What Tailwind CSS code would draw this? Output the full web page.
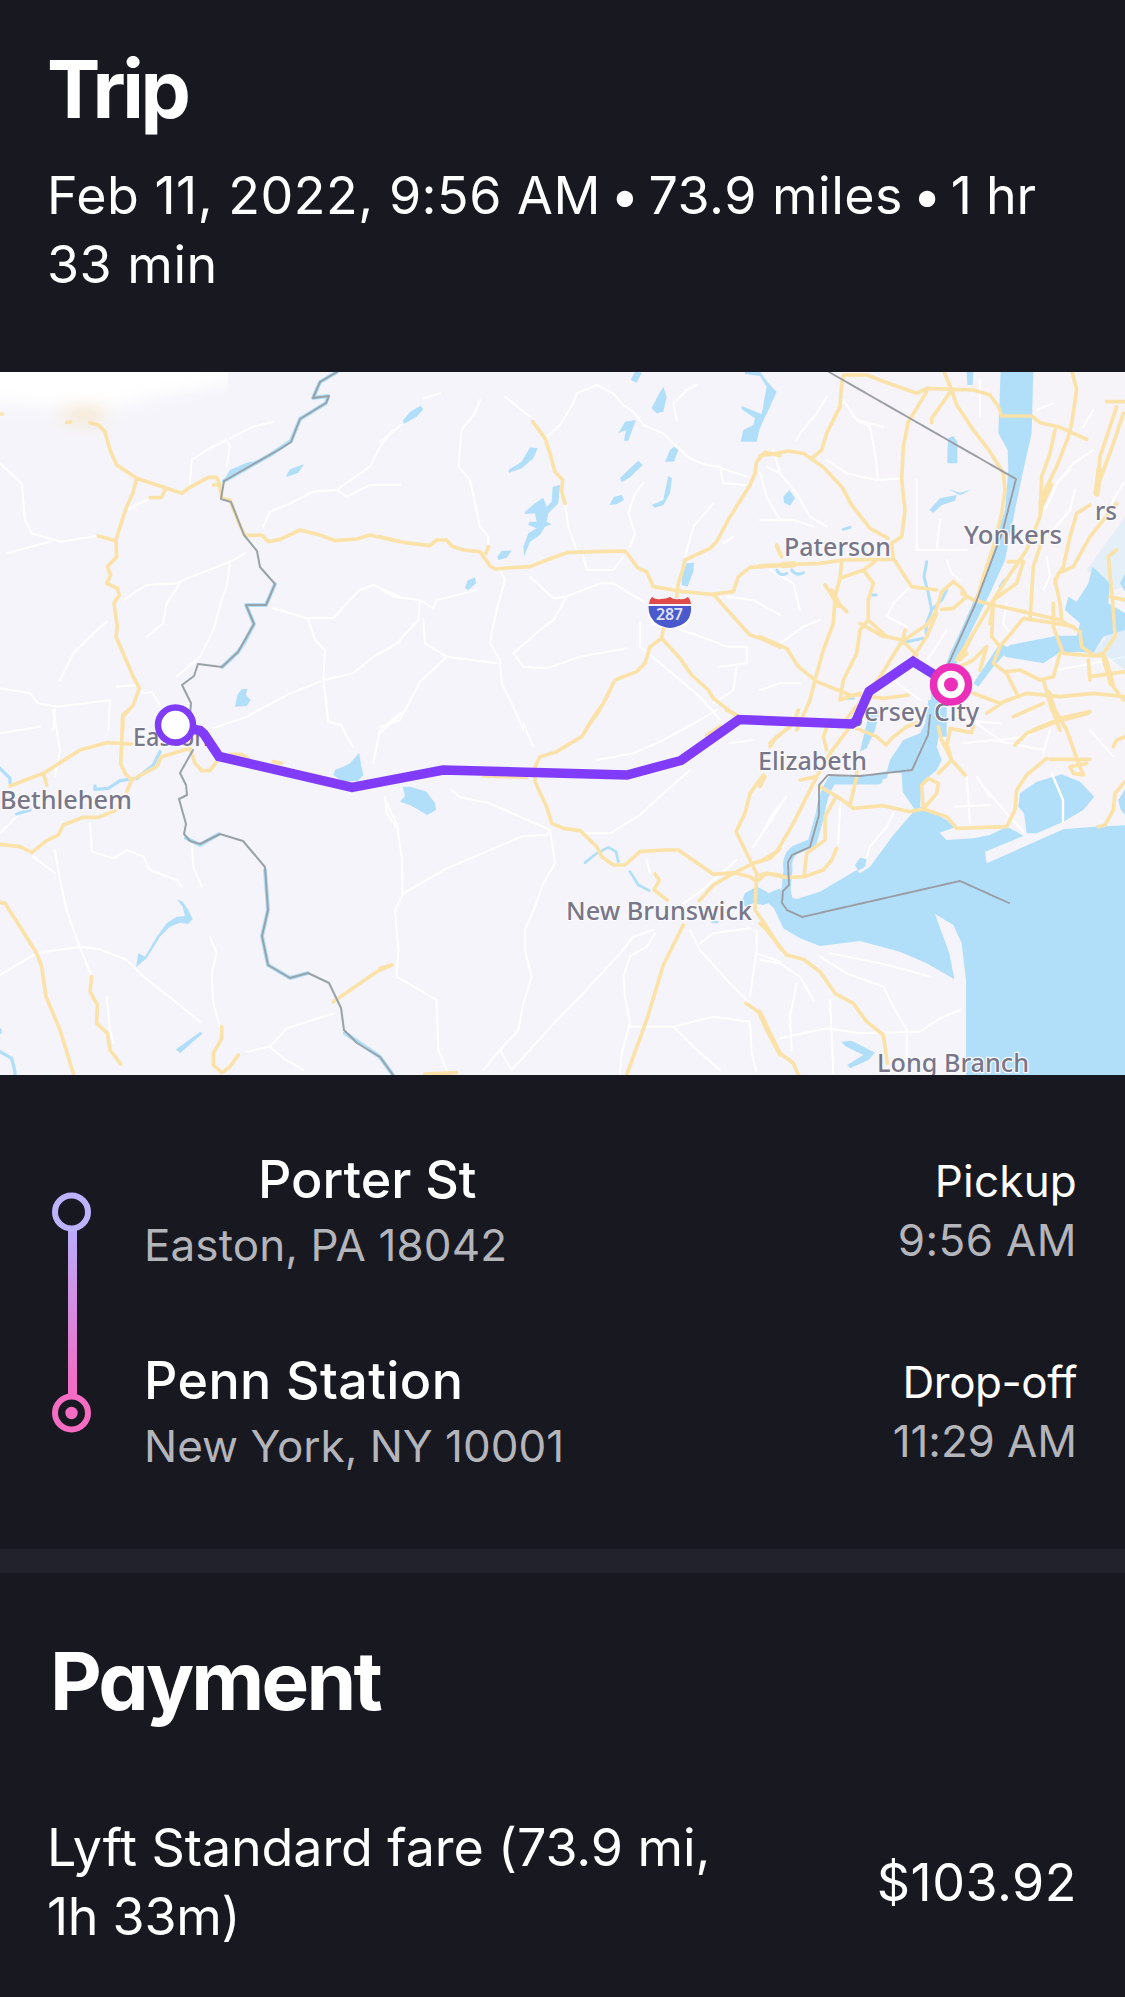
<!DOCTYPE html>
<html lang="en">
<head>
<meta charset="utf-8">
<title>Trip receipt</title>
<script src="https://cdn.jsdelivr.net/npm/@tailwindcss/browser@4"></script>
</head>
<body class="bg-[#181820] text-white font-['Inter',sans-serif] w-[1125px] h-[1997px] overflow-hidden flex flex-col">

<header class="h-[372px] shrink-0 pt-[49px] pl-[47px] pr-[40px]">
  <h1 class="text-[80px] leading-[80px] font-bold tracking-[-3.4px] [font-feature-settings:'cv11']">Trip</h1>
  <p class="mt-[32px] text-[52px] leading-[69px] font-normal tracking-[0.5px]">Feb 11, 2022, 9:56 AM<span class="[word-spacing:-5px] tracking-[-0.3px]"> • </span>73.9 miles<span class="[word-spacing:-5px] tracking-[-0.3px]"> • </span><span class="tracking-[-0.2px]">1 hr</span><br>33 min</p>
</header>

<svg class="block w-[1125px] h-[703px] shrink-0" viewBox="0 372 1125 703" fill="none" stroke-linecap="round" stroke-linejoin="round" font-family="'Noto Sans','Open Sans',sans-serif">
  <defs>
    <linearGradient id="fog" x1="0" y1="0" x2="0" y2="1"><stop offset="0" stop-color="#fff"/><stop offset=".35" stop-color="#fff" stop-opacity=".9"/><stop offset="1" stop-color="#fff" stop-opacity="0"/></linearGradient>
    <filter id="soft" x="-50%" y="-100%" width="200%" height="300%"><feGaussianBlur stdDeviation="9"/></filter>
  </defs>
  <rect y="372" width="1125" height="703" fill="#f5f4fa"/>
  <path d="M850 372H1125V830H1010L960 830L900 800L830 740L800 560Z" fill="#f7f3f8" opacity=".7"/>

  <!-- minor roads -->
  <g stroke="#ffffff" stroke-width="6">
    <g transform="translate(0 370) scale(.33333)">
      <path d="M570 340L575 270L620 240L680 210L690 230L680 290M690 205L760 170L820 155M0 280L65 340L75 450L95 490L180 515L290 498M20 550L150 515M380 420L450 385M790 470L810 425L870 400L940 365L1010 360L1060 325L1110 290L1140 230L1180 180M1010 360L1040 380L1110 345L1200 345M370 690L440 645L530 640L560 625L640 595L700 570L735 550M690 580L680 650L665 690L640 780L600 860L530 920M540 640L500 700L490 760L440 800M320 755L280 790L220 850L180 930M820 715L920 745L1000 745L1040 700L1080 660L1120 645L1200 680M925 750L945 810L975 840L970 930L985 1050M970 930L1060 910L1120 860L1200 815M960 935L870 970L740 1040L640 1075M0 955L90 970L115 1000L170 1010L330 990L325 1080M350 950L410 945L430 970L455 965L480 1005M165 1010L160 1080"/>
    </g>
    <g transform="translate(380 370) scale(.33333)">
      <path d="M300 90L285 130L245 180L235 290L270 330L285 400L300 470L325 500L325 530M0 215L70 160M130 85L180 70M375 80L450 140M500 200L540 165L580 100L590 70L650 45L700 70L730 105L760 125L790 165L850 190L880 220L930 265L980 285L1020 290L1030 340L1100 345M555 400L565 470L590 540M790 340L765 370L745 430L765 490L750 530M1000 400L940 470L915 560M1010 290L1100 320M890 150L880 100L920 60L950 45M730 560L700 600L620 600L610 560M360 600L375 630L355 700L335 790L330 820L360 870L365 940L400 1010L430 1080M450 620L520 685L560 680L660 640L700 640L790 695M560 680L520 750L480 780L400 850L430 890L500 895L600 860L740 835M780 760L780 830L840 880L960 980L1020 1050M0 655L40 680L120 690L160 715L170 690L290 660M120 690L115 750L50 820L0 850M130 750L135 820L200 860L120 935L60 1050L0 1070M200 860L350 880M900 780L950 795L1040 830L1100 830L1100 880L1020 890M1040 680L1120 690L1200 735M1140 310L1160 380L1200 450M1060 500L1030 520M1000 1000L1060 960L1070 890"/>
    </g>
    <g transform="translate(760 370) scale(.33333)">
      <path d="M200 80L170 130L120 190L110 210M250 90L290 150L330 170L345 250L355 330M290 150L370 170M40 240L60 310L110 370L150 440L200 470M0 450L100 450L160 470M60 310L20 290M200 270L260 310L350 330L430 325M470 330L470 540L620 540M540 450L530 540M560 570L575 610L600 630M660 30L660 140M840 440L870 390L890 340L940 280L1000 240M880 480L930 420L945 360M1040 440L1060 390L1090 340M380 740L400 700L450 650M380 740L440 770M60 820L130 770L180 750M0 960L60 940L120 940M30 600L100 640L120 720M880 100L830 120M900 330L930 300M1000 120L970 170M860 560L870 620L850 660M740 700L730 760L750 790M890 900L1000 880L1095 860M560 780L530 830L500 870M400 930L480 990"/>
    </g>
    <g transform="translate(0 710) scale(.33333)">
      <path d="M0 70L120 50M160 0L180 120L165 200M165 420L180 510L200 600L235 700L275 800M100 440L165 490M270 340L275 425L340 445L380 420L430 440L450 480L530 510L545 530M0 795L110 730L240 710L300 718L380 750L430 800L520 870L600 935M575 400L580 470L605 530M630 680L650 730L635 790L640 880L660 950M320 860L330 960L340 1000M1000 910L860 955L810 1010L740 1025M810 1010L850 1045L910 1080M980 0L985 35L1025 45L1035 70L1060 110M1120 160L1140 60L1200 10M1155 260L1160 310L1195 360M0 370L60 310"/>
    </g>
    <g transform="translate(380 710) scale(.33333)">
      <path d="M215 240L240 262L330 280L430 325L510 360L500 375L430 378L200 475L70 550L45 600L55 720L50 800L170 870L175 1020L200 1080M15 270L50 340L65 440L68 550M510 360L525 460L490 520L465 590L435 660L435 720L455 800L430 880L415 960L360 1020L395 1080L540 920L600 860L720 730L760 680L820 660M360 1020L310 1080M825 670L800 710L750 740L730 800L735 860L750 940L725 1030L720 1090M600 370L690 370L780 315L850 250L930 180M0 70L75 0M430 40L460 110M650 150L760 130L850 90L960 30L1010 0M930 660L960 720L1050 820L1110 880M960 700L1000 670L1110 655M1130 660L1130 720L1110 860M1130 730L1200 755M750 950L880 950L1000 920L1110 935L1115 1030L1130 1085M880 950L940 1010L1020 1080M1120 410L1200 290M800 450L810 490M910 580L960 545L1070 450M1050 100L1120 90"/>
    </g>
    <g transform="translate(760 710) scale(.33333)">
      <path d="M0 380L40 310L80 260M400 310L380 350L330 410L310 470M240 290L235 400M0 750L60 760L120 800L160 870M180 740L260 790L370 830L400 890L440 960L440 1060M110 820L90 920L95 1020M60 985L200 955L300 970L480 965L540 925L600 900M210 870L220 1090M210 730L360 760L440 780L510 800M585 290L690 285M620 200L630 340M610 100L700 90L850 120M650 40L720 90L800 80L870 30M680 240L740 310L790 365M650 200L690 260M870 60L850 130M600 30L720 40M990 60L1060 140"/>
    </g>
  </g>

  <!-- water -->
  <g fill="#b1dff9">
    <g transform="translate(760 710) scale(.33333)">
      <path d="M35 580L70 655L120 685L180 708L300 693L420 725L500 760L583 808L568 730L525 612L580 645L605 700L618 810L618 1105H1105V345L1000 350L910 358L680 460L675 425L790 378L770 365L740 350L690 375L640 385L560 390L538 368L585 352L560 330L500 297L480 290L485 220L530 180L545 150L530 110L540 60L560 -30L505 -30L495 40L480 70L430 90L390 150L380 185L425 190L428 245L465 300L400 375L330 470L300 490L290 480L180 545L110 567L85 560L78 535L60 540Z"/>
      <path d="M775 290L780 250L830 215L905 193L960 215L1003 260L970 300L910 335L830 370L800 370L792 310Z"/>
      <path d="M1100 230L1075 270L1082 300L1100 320ZM285 465L300 443L320 448L315 470L295 482Z"/>
      <path d="M-10 530L20 545L35 575L10 585L-20 580Z"/>
      <path d="M300 125L315 60L330 0L360 0L345 60L320 115Z"/>
      <path d="M245 995L275 992L345 1028L325 1050L270 1075L262 1065L310 1035L255 1008Z"/>
      <path d="M385 190L380 205L330 220L300 218L300 200L385 182Z"/>
    </g>
    <path d="M878 780L832 780Q822 795 820 815L812 843L795 850Q786 856 788 870L786 890L790 908" fill="none" stroke="#b1dff9" stroke-width="9"/>
    <g transform="translate(760 370) scale(.33333)">
      <path d="M722 0H820L815 190L790 300L765 420L735 570L690 670L640 770L595 860L560 1000L560 1100H500L515 960L555 890L570 850L610 765L655 660L695 540L735 420L745 300L743 240L715 190Z"/>
      <path d="M720 850L750 825L890 797L950 797L960 760L915 720L925 680L950 695L985 640L998 590L1050 640L1045 700L1095 730V780L1030 800L1000 850L960 845L895 850L850 880L780 868L740 862Z"/>
      <path d="M1095 610L1080 640L1095 665ZM640 940L680 880L720 820L750 835L700 890L655 950ZM620 0H640L638 45L622 45Z"/>
      <path d="M565 205L580 198L592 215V280H562V240ZM508 420L540 385L590 375L585 392L545 405L520 428ZM565 358L600 368L638 358L600 376ZM70 380L88 360L105 385L90 407L72 398Z"/>
      <path d="M980 600L1095 440V650L1060 660Z" opacity=".25"/><path d="M1000 850L1040 800L1095 780V900L1030 850Z" opacity=".3"/>
      <path d="M500 575L492 620L505 670L515 720L500 760L498 790M515 720L545 690L560 660M440 815L490 805M50 600Q60 620 80 610M95 600Q110 620 130 608M250 985H280M250 478L270 472M720 650L735 630M338 675H348" fill="none" stroke="#b1dff9" stroke-width="9"/>
    </g>
    <g transform="translate(380 370) scale(.33333)">
      <path d="M70 150L90 125L122 107L130 118L110 140L70 162ZM385 300L425 275L450 232L473 235L460 265L425 295L388 308ZM435 425L465 400L490 383L500 410L515 395L518 350L540 345L535 400L505 430L500 455L515 463L495 470L480 495L450 515L432 560L430 530L445 490L470 475L445 465L448 455L470 455L465 430L435 432ZM352 560L365 542L395 542L380 563L355 570ZM255 655L262 632L285 622L288 640L265 660Z"/>
      <path d="M752 30L765 5L785 8L770 38ZM815 115L835 75L850 50L860 80L850 125L830 130ZM715 190L735 155L768 150L760 170L745 212L732 212L738 180ZM855 275L870 240L882 230L895 240L882 275ZM720 325L750 295L775 272L788 285L750 322L725 337ZM688 405L702 380L725 375L732 390L710 403ZM815 405L850 390L858 350L865 318L876 325L870 370L850 405L825 413ZM905 645L905 615L920 580L942 578L940 605L922 650Z"/>
      <path d="M1095 5L1140 5L1165 40L1190 65L1170 110L1155 140L1138 180L1130 215L1082 215L1090 180L1120 165L1125 145L1085 118L1085 108L1145 133L1160 50L1140 18L1095 12Z"/>
    </g>
    <g transform="translate(0 370) scale(.33333)">
      <path d="M858 318L870 298L912 282L895 308L862 320ZM705 1010L712 975L725 958L742 956L738 975L752 990L740 1008ZM675 325L690 300L740 278L800 265L720 305L680 330Z"/>
    </g>
    <g transform="translate(0 710) scale(.33333)">
      <path d="M408 772L415 730L435 740L470 680L500 640L530 620L555 618L548 590L530 568L548 575L565 600L578 628L565 642L540 638L510 650L480 680L440 745ZM528 1018L600 966L608 970L540 1030ZM1000 195L1005 180L1030 170L1050 160L1078 128L1083 165L1090 195L1075 212L1030 215Z"/>
      <path d="M480 125L460 165L410 205L360 212L325 235L285 238L285 228M50 312L90 300M0 175L30 205V218M0 1025L35 1045L45 1085V1100M0 960V968" fill="none" stroke="#b1dff9" stroke-width="10"/>
    </g>
    <g transform="translate(380 710) scale(.33333)">
      <path d="M68 230L90 230L140 245L165 280L168 300L142 315L90 285L60 275L75 258ZM1085 575L1095 550L1130 530L1165 550L1200 535V610L1165 580L1130 575L1095 590Z"/>
      <path d="M615 458L650 430L685 412L708 425L715 455M750 485L775 525L808 542M998 636H1012" fill="none" stroke="#b1dff9" stroke-width="8"/>
    </g>
  </g>
  <path d="M1052 774L1063 800L1063 822" stroke="#fff" stroke-width="2.4"/>

  <!-- highways -->
  <g stroke="#fae2a9" stroke-width="11">
    <g transform="translate(0 370) scale(.33333)">
      <path d="M0 132L8 132M200 157L212 156M270 158L295 165L315 185L330 240L350 285L410 325L545 370L570 352L625 322L650 322L658 340L665 385L690 390L715 455L735 497M450 383L485 382L495 360M640 345L658 343M735 497L785 495L805 515L840 508L900 480L960 495L1005 512L1070 507L1110 495L1200 515M410 325L400 365L380 410L360 470L348 510L350 560L322 590L332 615L320 640L352 655L358 675L342 700L352 770L348 800L400 920L418 955L400 1005L368 1040V1080M295 498L320 505L345 512"/>
    </g>
    <g transform="translate(380 370) scale(.33333)">
      <path d="M0 500L70 517L150 527L170 510H200L215 528L250 540L300 545L330 588L345 597L410 592L450 590L500 570L560 548L640 545L735 543L775 595L800 605L820 650L880 660L910 665L995 673L1060 665L1075 620L1110 592L1200 587M325 530L318 550M458 155L495 205L510 250L525 305L548 330L545 365L555 400M1200 257L1155 247L1130 275L1125 310L1110 345L1085 385L1050 440L1010 515L990 535L915 570L905 610L895 640L890 680M850 775L845 805L810 830L795 880L770 905L705 930L670 1000L635 1050L615 1085M845 805L900 865L935 915L985 960L1000 985L1065 1035M1000 673L1060 740L1110 795L1150 808L1200 832M1190 525L1200 550"/>
    </g>
    <g transform="translate(760 370) scale(.33333)">
      <path d="M0 257L50 250L85 243L130 250L190 292L245 350L275 405L330 475L385 505M155 265L185 240L200 190L240 110L245 45L250 15L320 15L400 45L470 70L500 55L640 60L690 75L715 110L725 138L815 138L840 158L900 172L980 208M550 0L575 60L515 145V158M575 60L590 105L640 180L690 245L730 310L735 360L725 430L700 530L670 620L650 690M500 65L470 115L445 155L430 230L425 330L435 420L425 500L395 520L400 565L455 650L530 660M0 587L180 580L250 570L395 568M50 530L65 560M245 575L240 625L310 600L345 575M310 600L340 640L325 690L325 750L380 800L425 810L470 855M240 625L225 680L220 760L190 840L165 930L150 990L110 1080M195 645L225 690L260 725M320 755L300 780L290 850L250 930L240 990L300 970M300 760L370 800M425 815L360 920L330 960L240 1070M425 815L500 765L525 730L545 665L580 635L605 655L620 680L580 715L545 718M605 670L640 690L700 705L790 725L900 750L960 785L965 830L1000 855L1035 860M435 780L425 820M530 730L500 800L460 860M0 800L80 835L115 890L170 935L270 975L300 975L370 985L445 975"/>
      <path d="M935 0L950 60L935 160L925 200L890 290L855 360L840 440L800 540L745 620L700 690L640 790L590 870M885 180L870 250L845 320L840 440M1040 95H1095M1070 110L1040 200L1020 260L1010 370M1090 130L1060 220L1020 330M990 405L950 430L930 500L910 590L885 630L900 700L905 750M1070 400L990 500L940 590L895 610L885 640M850 500L820 590L810 750M745 575H790L770 640L700 690L695 800L720 830L700 880L740 910L770 970M700 705L690 760M720 830L790 745L890 760L940 770M880 700L880 770L910 850L1000 858L1030 850L1065 800L1060 720L1045 560L1070 540M1050 680L1095 690M900 850L880 920L840 930L780 900L740 905M850 930L870 1000L900 1080M1030 855L1060 950L1090 990M990 920L1095 905M640 970L720 1000L800 970L900 980L1000 970L1095 980M640 790L600 870L620 850M660 900L680 830L640 870L600 890M680 1030L740 990M820 1080L900 1045L990 1025M760 1040L850 1000M985 870L990 930"/>
    </g>
    <g stroke-width="19" transform="translate(760 370) scale(.33333)"><path d="M870 345L845 400M1018 300L1010 370M1035 870L1055 940M865 970L880 1020M215 665L235 705M70 585L100 583"/></g>
    <g transform="translate(0 710) scale(.33333)">
      <path d="M385 0L368 15L365 100L362 160L375 190L395 210L380 245M395 102L320 98L240 120L190 152L130 190L30 228M130 190L140 225M395 210L470 170L485 140L570 115L585 160L605 182L630 182L650 155M690 133H725L745 145M820 155L845 160M0 403L60 410L95 427L140 392L175 375L190 345L250 322L295 322L345 302M0 577L15 580L60 650L110 730L125 770L138 860L180 960L220 1090M275 800L270 845L292 885L290 940L322 970L330 1020L362 1062M665 950V985L640 1030L640 1065L665 1088L690 1070L715 1035M1000 875L1130 785L1175 765"/>
    </g>
    <g transform="translate(380 710) scale(.33333)">
      <path d="M660 0L630 40L605 80L530 125L480 140L465 170V215L500 290L515 340L550 355L600 362L650 410L665 440L700 465H735L780 425L850 420L895 420L1000 493L1060 488L1110 500L1130 515L1160 490L1200 495M310 198L440 202M825 492L838 510L822 540L862 570M958 572L1000 525L1060 490L1120 460L1170 445L1200 415M910 645L850 765L800 930L740 1095M1170 100L1180 90L1200 75M1150 195L1110 250L1095 310L1068 365L1110 450L1130 490L1125 600L1160 650L1200 715M0 775L35 766M135 1092L230 1088M1098 880L1135 905L1165 970L1200 1035M980 75L1020 50M1040 0L1070 15"/>
    </g>
    <g transform="translate(760 710) scale(.33333)">
      <path d="M0 455L50 425L100 340L170 200L210 130L270 50M0 230L15 200M30 110L50 80L90 50M120 210L170 200M100 40L115 0M180 230L240 265L280 295L370 287L450 305L490 297L560 320L590 355L740 350L765 300L770 240L800 195L860 145M225 265L195 320L195 390L140 430L132 500M0 495L20 490L80 502L132 500L190 480L215 450L230 415M270 285L290 200L290 180M490 297L485 225L505 205L535 220L530 250L490 297M535 190L575 150L545 90L535 50M570 55L635 68L640 50M560 100L575 150L615 195M570 60L560 110M205 40L190 80L200 120M290 55L350 80L378 105L395 85L440 50L480 35M0 640L20 660L80 735L130 748L180 785L225 850L280 880L320 935L370 975L382 1060M0 905L60 1030L100 1060L115 1095M765 105L800 70L890 35L985 10M885 0L920 60L950 145L970 195L940 190L930 170L980 160M870 148L990 148M1060 110L1070 90L1095 80M1095 215L1065 250L1060 300L1035 345L1015 350"/>
    </g>
  </g>

  <!-- state borders and the river along them -->
  <path d="M337 372L320 382L313 398L328 396L326 403L300 419L291 441L270 455L224 481M275 584L266 605L246 605L254 624L244 643L238 652L222 667M186 838L200 845L219 834M265 870L268 910L262 936L268 965L290 978L308 973M345 1033L380 1057L393 1075" stroke="#b1dff9" stroke-width="4"/>
  <path d="M337 372L320 382L313 398L329 396L326 403L300 419L291 442L280 449L224 481L221 499L231 502L244 535L257 551L260 567L275 584L266 605L246 605L254 624L238 652L222 667L198 664L194 676L182 685L191 703L190 715M193 750L180 773L186 785L187 795L179 799L186 824L184 834L190 841L200 844L220 834L243 841L265 867L268 910L262 936L268 965L290 978L308 973L329 983L341 1008L344 1030L357 1043L380 1057L393 1075" stroke="#98a3a9" stroke-width="2"/>
  <path d="M829 372L1016 479L1003 530L975 605L948 665M930 715L928 735L912 770L860 776L828 775L819 785L819 815L810 847L792 855L788 862L789 885L783 891L782 903L787 910L802 917L960 881L1009 903" stroke="#9a9da3" stroke-width="1.9" stroke-dasharray="14 1.2 5 1.2"/>

  <!-- washed-out corner -->
  <path d="M-30 340H215V380L190 388L110 408L-30 402Z" fill="#fff" filter="url(#soft)"/>
  <rect y="360" width="228" height="36" fill="url(#fog)"/>
  <ellipse cx="84" cy="415" rx="22" ry="7" fill="#f8d9a0" opacity=".6" filter="url(#soft)"/>

  <!-- place names -->
  <g fill="#777789" stroke="#fbfafd" stroke-width="2.500" paint-order="stroke" font-size="26" font-weight="500">
    <text x="784" y="556" textLength="107" lengthAdjust="spacingAndGlyphs">Paterson</text>
    <text x="964" y="544" textLength="98" lengthAdjust="spacingAndGlyphs">Yonkers</text>
    <text x="1095" y="520" textLength="22" lengthAdjust="spacingAndGlyphs">rs</text>
    <text x="857" y="721" textLength="122" lengthAdjust="spacingAndGlyphs">Jersey City</text>
    <text x="758" y="770" textLength="109" lengthAdjust="spacingAndGlyphs">Elizabeth</text>
    <text x="566" y="920" textLength="186" lengthAdjust="spacingAndGlyphs">New Brunswick</text>
    <text x="877" y="1072" textLength="152" lengthAdjust="spacingAndGlyphs">Long Branch</text>
    <text x="0" y="809" textLength="132" lengthAdjust="spacingAndGlyphs">Bethlehem</text>
    <text x="133" y="746" textLength="76" lengthAdjust="spacingAndGlyphs">Easton</text>
  </g>

  <!-- interstate shield -->
  <path d="M649 606Q644 625 657 626.500L669.500 629L683 626.500Q693 625 690 606Z" fill="#fff" opacity=".8"/>
  <path d="M652 597Q656 600 661 599Q666 599 670 597Q674 600 679 599Q684 600 688 597Q691 600 691 604H649Q649 600 652 597Z" fill="#df4b4b"/>
  <path d="M648.500 606H691Q692 620 681 625Q674 628 670 628Q666 628 659 625Q648 619 648.500 606Z" fill="#4a59cb"/>
  <text x="669.500" y="620" text-anchor="middle" font-size="16" font-weight="600" fill="#dfe3fb" textLength="27">287</text>

  <!-- route -->
  <path d="M176 726L200 730.500L204 734L219 756.500L352 787.500L443 770L627 775L681 760.500L739 719.500L852 724L856 721L869 691.500L913 661.500L951 685" stroke="#803cf8" stroke-width="9.500" stroke-linejoin="miter" stroke-linecap="butt"/>
  <circle cx="175.500" cy="725" r="17.500" fill="#fff" stroke="#803cf8" stroke-width="6.500"/>
  <circle cx="951" cy="684.500" r="17.500" fill="#fff" stroke="#ec2fb9" stroke-width="7.500"/>
  <circle cx="951" cy="684.500" r="7" fill="#ec2fb9"/>
</svg>

<section class="h-[474px] shrink-0 flex pt-[75px] pl-[52px] pr-[48px]">
  <svg class="w-[40px] h-[242px] mt-[42px] shrink-0" viewBox="0 0 40 242" fill="none">
    <defs><linearGradient id="leg" x1="0" y1="0" x2="0" y2="1"><stop offset="0" stop-color="#b9adfb"/><stop offset=".85" stop-color="#ec72c9"/><stop offset="1" stop-color="#f56cc3"/></linearGradient></defs>
    <rect x="16" y="37" width="9" height="168" fill="url(#leg)"/>
    <circle cx="19.500" cy="20" r="16.500" stroke="#bdb2fb" stroke-width="6"/>
    <circle cx="19.500" cy="221" r="16.500" stroke="#f56cc3" stroke-width="6"/>
    <circle cx="19.500" cy="221" r="6.200" fill="#f56cc3"/>
  </svg>
  <div class="flex-1 flex flex-col gap-[71px] pl-[52px]">
    <div class="h-[130px] flex justify-between">
      <div>
        <h2 class="pl-[114px] text-[52px] leading-[60px] font-medium tracking-[0px]">Porter St</h2>
        <p class="text-[44px] leading-[70px] font-normal text-[#b4b4bb] tracking-[0.1px]">Easton, PA 18042</p>
      </div>
      <div class="text-right pt-[2px] text-[44px] leading-[59px] font-normal">
        <p class="tracking-[0.2px]">Pickup</p>
        <p class="text-[#b4b4bb] tracking-[0.4px]">9:56 AM</p>
      </div>
    </div>
    <div class="h-[130px] flex justify-between">
      <div>
        <h2 class="text-[52px] leading-[60px] font-medium tracking-[0.4px]">Penn Station</h2>
        <p class="text-[44px] leading-[70px] font-normal text-[#b4b4bb]">New York, NY 10001</p>
      </div>
      <div class="text-right pt-[2px] text-[44px] leading-[59px] font-normal">
        <p class="tracking-[-0.5px]">Drop-off</p>
        <p class="text-[#b4b4bb] tracking-[-0.1px]">11:29 AM</p>
      </div>
    </div>
  </div>
</section>

<div class="h-[24px] shrink-0 bg-[#22222c]"></div>

<section class="flex-1 pt-[68px] pl-[47px] pr-[48px]">
  <h1 class="text-[80px] leading-[80px] font-bold tracking-[-2.8px] pl-[3px] [font-feature-settings:'cv11']">Payment</h1>
  <div class="mt-[92px] flex items-center justify-between">
    <p class="text-[52px] leading-[69px] font-normal tracking-[-0.1px]">Lyft Standard fare (73.9 mi,<br><span class="tracking-[-0.3px]">1h 33m)</span></p>
    <p class="text-[52px] leading-[69px] font-normal tracking-[0.5px]">$103.92</p>
  </div>
</section>
</body>
</html>
